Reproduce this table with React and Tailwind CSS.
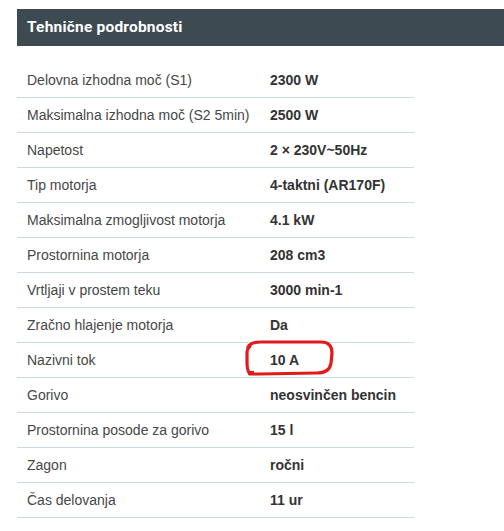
import React from "react";

const specs = [
  ["Delovna izhodna moč (S1)", "2300 W"],
  ["Maksimalna izhodna moč (S2 5min)", "2500 W"],
  ["Napetost", "2 × 230V~50Hz"],
  ["Tip motorja", "4-taktni (AR170F)"],
  ["Maksimalna zmogljivost motorja", "4.1 kW"],
  ["Prostornina motorja", "208 cm3"],
  ["Vrtljaji v prostem teku", "3000 min-1"],
  ["Zračno hlajenje motorja", "Da"],
  ["Nazivni tok", "10 A"],
  ["Gorivo", "neosvinčen bencin"],
  ["Prostornina posode za gorivo", "15 l"],
  ["Zagon", "ročni"],
  ["Čas delovanja", "11 ur"],
];

function Scribble() {
  return (
    <svg
      className="absolute left-[226px] top-[-3px] pointer-events-none"
      width="92"
      height="38"
      viewBox="0 0 92 38"
      fill="none"
    >
      <path
        d="M5 7 C7 3 11 2 18 2 L78 2 C86 2 89 6 89 13 L88 23 C87 30 82 33 74 33 L16 34 L7 34 C5 32 4 28 4 22 L4 12 C4 9 5 8 7 6"
        stroke="#e3191c"
        strokeWidth="3.2"
        strokeLinecap="round"
        strokeLinejoin="round"
      />
      <path d="M5 31 L11 31 L11 35 L5 35 Z" fill="#e3191c" />
    </svg>
  );
}

export default function App() {
  return (
    <div className="w-[504px] h-[531px] bg-white pt-[9px] pl-[17px] overflow-hidden font-['Liberation_Sans',Arial,sans-serif]">
      <div className="h-[37px] bg-[#3d4a52] flex items-center pl-[10px]">
        <h2 className="text-white font-bold text-[15.5px] font-['Roboto',sans-serif] tracking-[0.2px]">
          Tehnične podrobnosti
        </h2>
      </div>
      <div className="mt-[17px] w-[397px]">
        {specs.map(([label, value]) => (
          <div
            key={label}
            className="relative flex items-center h-[35px] border-b border-[#cbdae5] text-[14px]"
          >
            <div className="w-[253px] pl-[10px] text-[#474747]">{label}</div>
            <div className="font-bold text-[#333]">{value}</div>
            {label === "Nazivni tok" && <Scribble />}
          </div>
        ))}
      </div>
    </div>
  );
}
